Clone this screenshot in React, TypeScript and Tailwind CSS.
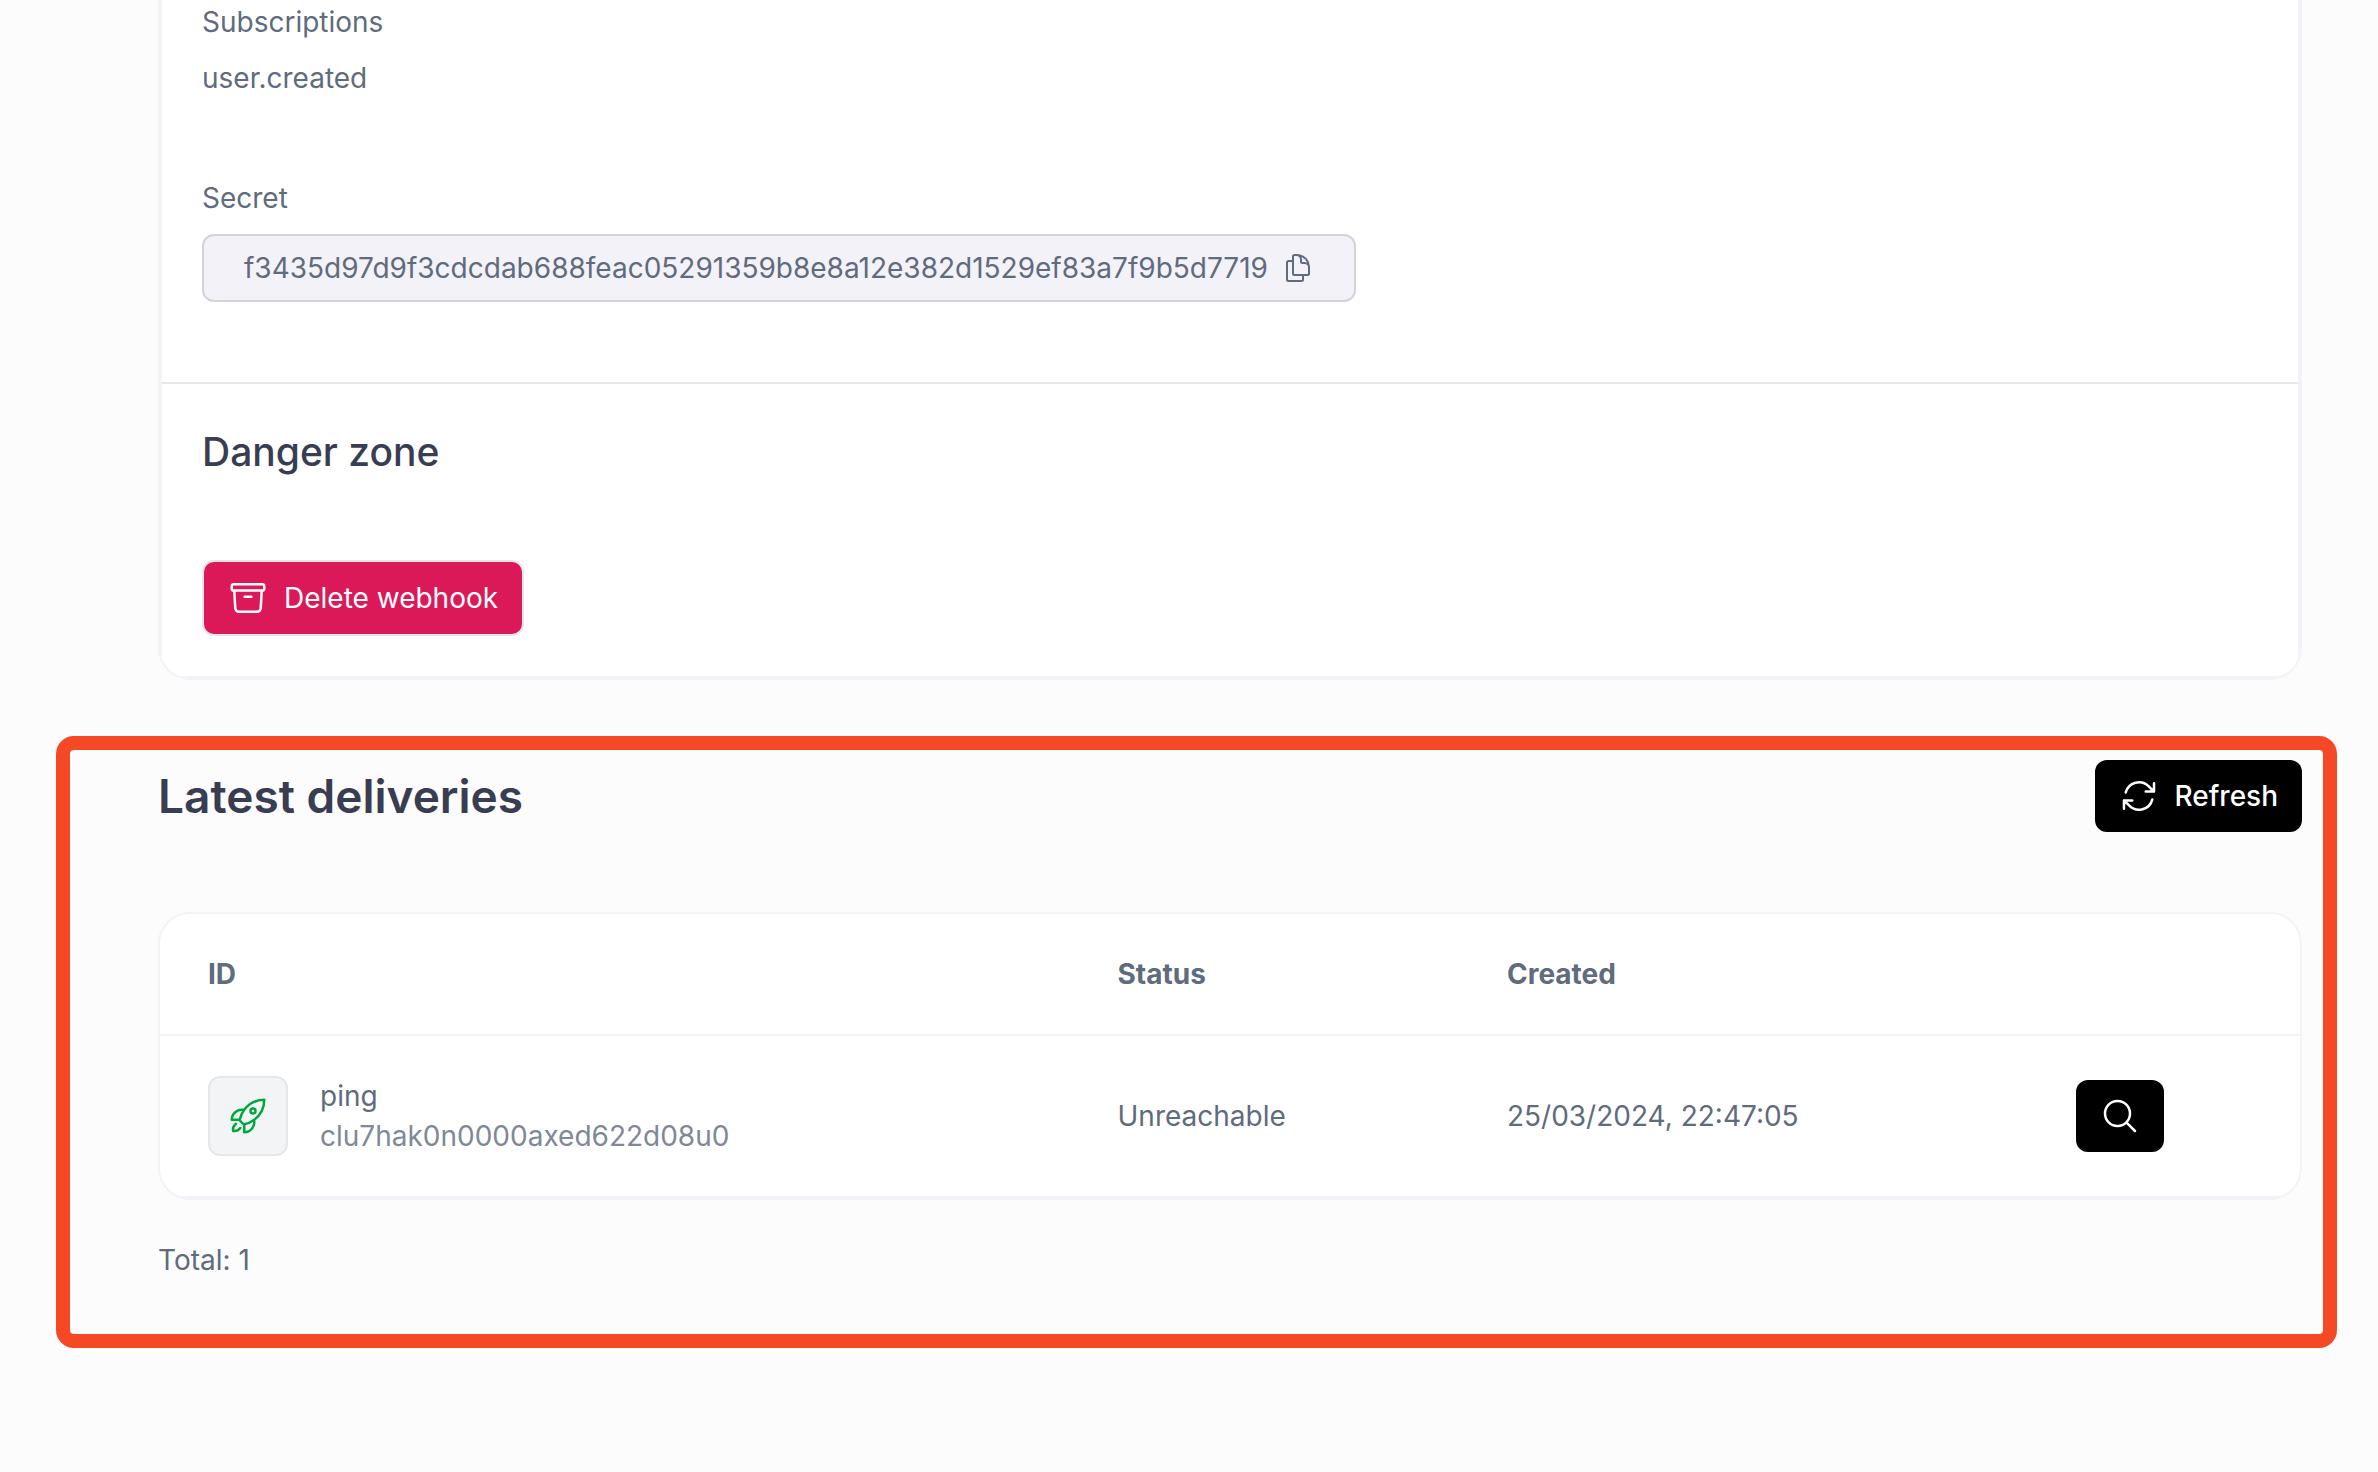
import type { ReactNode } from "react";
import {
    HiOutlineArchiveBox,
    HiOutlineArrowPath,
    HiOutlineDocumentDuplicate,
    HiOutlineMagnifyingGlass,
    HiOutlineRocketLaunch,
} from "react-icons/hi2";

type Delivery = {
    id: string;
    event: string;
    status: string;
    created: string;
};

const secret = "f3435d97d9f3cdcdab688feac05291359b8e8a12e382d1529ef83a7f9b5d7719";

const deliveries: Delivery[] = [
    {
        id: "clu7hak0n0000axed622d08u0",
        event: "ping",
        status: "Unreachable",
        created: "25/03/2024, 22:47:05",
    },
];

function Card({ children }: { children: ReactNode }) {
    return (
        <div className="overflow-hidden rounded-[32px] border-2 border-[#f3f2f8] bg-white">
            {children}
        </div>
    );
}

function WebhookDetails() {
    return (
        <div className="overflow-hidden rounded-b-[32px] border-2 border-t-0 border-[#f3f2f8] bg-white">
            <div className="border-2 border-t-0 border-[#f3f2f8]">
                <div className="px-10 pt-0.5 pb-20">
                    <h3>Subscriptions</h3>
                    <p className="mt-4">user.created</p>

                    <h3 className="mt-20">Secret</h3>
                    <div className="mt-4 flex w-fit items-center gap-3.5 rounded-xl border-2 border-[#d4d3d9] bg-[#f3f2f8] px-10 py-3">
                        <span>{secret}</span>
                        <button
                            type="button"
                            aria-label="Copy secret"
                            onClick={() => navigator.clipboard.writeText(secret)}
                        >
                            <HiOutlineDocumentDuplicate className="size-8" />
                        </button>
                    </div>
                </div>

                <div className="border-t-2 border-gray-200 px-10 py-10">
                    <h2 className="text-[39px] leading-14 font-medium text-[#383d51]">
                        Danger zone
                    </h2>
                    <button
                        type="button"
                        className="mt-20 flex items-center gap-4 rounded-xl border-2 border-gray-200 bg-[#dc1958] px-6 py-4 text-white"
                    >
                        <HiOutlineArchiveBox className="size-10" />
                        Delete webhook
                    </button>
                </div>
            </div>
        </div>
    );
}

function DeliveriesTable() {
    return (
        <table className="w-full table-fixed text-left">
            <colgroup>
                <col className="w-[42.5%]" />
                <col className="w-[18.2%]" />
                <col className="w-[26.6%]" />
                <col />
            </colgroup>
            <thead>
                <tr className="border-b-2 border-[#f3f2f8]">
                    <th className="px-12 py-10 font-bold">ID</th>
                    <th className="px-12 py-10 font-bold">Status</th>
                    <th className="px-12 py-10 font-bold">Created</th>
                    <th></th>
                </tr>
            </thead>
            <tbody>
                {deliveries.map((delivery) => (
                    <tr key={delivery.id} className="border-b-2 border-[#f3f2f8]">
                        <td className="px-12 py-10">
                            <div className="flex items-center gap-8">
                                <div className="flex size-20 items-center justify-center rounded-xl border-2 border-gray-200 bg-gray-100">
                                    <HiOutlineRocketLaunch className="size-10 text-green-600" />
                                </div>
                                <div>
                                    <p>{delivery.event}</p>
                                    <p className="text-[#808897]">{delivery.id}</p>
                                </div>
                            </div>
                        </td>
                        <td className="px-12">{delivery.status}</td>
                        <td className="px-12">{delivery.created}</td>
                        <td className="px-12">
                            <button
                                type="button"
                                aria-label="View delivery"
                                className="block rounded-xl bg-black px-6 py-4 text-white"
                            >
                                <HiOutlineMagnifyingGlass className="size-10" />
                            </button>
                        </td>
                    </tr>
                ))}
            </tbody>
        </table>
    );
}

export default function App() {
    return (
        <main className="min-h-screen bg-[#fcfcfc] font-['Inter',sans-serif] text-[28px] leading-10 text-[#606b7e]">
            <div className="mr-19 ml-[158px]">
                <WebhookDetails />
            </div>

            <section className="mt-14 mr-[41px] ml-14 rounded-[18px] border-14 border-[#f54825] pt-[10px] pr-[21px] pb-[54px] pl-22">
                <div className="flex items-center justify-between">
                    <h1 className="text-[46px] leading-14 font-semibold text-[#383d51]">
                        Latest deliveries
                    </h1>
                    <button
                        type="button"
                        className="flex items-center gap-4 rounded-xl bg-black px-6 py-4 font-medium text-white"
                    >
                        <HiOutlineArrowPath className="size-10" />
                        Refresh
                    </button>
                </div>

                <div className="mt-20">
                    <Card>
                        <DeliveriesTable />
                    </Card>
                </div>

                <p className="mt-10">Total: {deliveries.length}</p>
            </section>
        </main>
    );
}
